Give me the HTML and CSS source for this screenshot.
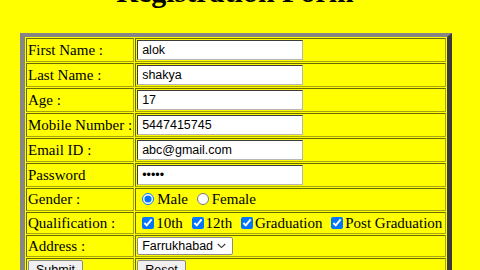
FILE: index.html
```html
<!DOCTYPE html>
<html>
<head>
<meta charset="utf-8">
<link rel="stylesheet" href="styles.css">
</head>
<body>
<h1 class="title">Registration Form</h1>
<form class="form">
<table class="reg">
  <tr class="row-input"><td class="label">First Name :</td><td class="field"><input class="text" type="text" value="alok"></td></tr>
  <tr class="row-input"><td class="label">Last Name :</td><td class="field"><input class="text" type="text" value="shakya"></td></tr>
  <tr class="row-input"><td class="label">Age :</td><td class="field"><input class="text" type="text" value="17"></td></tr>
  <tr class="row-input"><td class="label">Mobile Number :</td><td class="field"><input class="text" type="text" value="5447415745"></td></tr>
  <tr class="row-input"><td class="label">Email ID :</td><td class="field"><input class="text" type="text" value="abc@gmail.com"></td></tr>
  <tr class="row-input"><td class="label">Password</td><td class="field"><input class="text" type="password" value="alok1"></td></tr>
  <tr class="row-gender"><td class="label">Gender :</td><td class="field"><input class="radio" type="radio" name="g" checked>Male <input class="radio" type="radio" name="g">Female</td></tr>
  <tr class="row-small"><td class="label">Qualification :</td><td class="field"><input class="check" type="checkbox" checked>10th <input class="check" type="checkbox" checked>12th <input class="check" type="checkbox" checked>Graduation <input class="check" type="checkbox" checked>Post Graduation</td></tr>
  <tr class="row-small"><td class="label">Address :</td><td class="field"><select class="sel"><option>Farrukhabad</option></select></td></tr>
  <tr class="row-btn"><td class="label"><button class="btn" type="button">Submit</button></td><td class="field"><button class="btn" type="button">Reset</button></td></tr>
</table>
</form>
</body>
</html>
```

FILE: styles.css
```css
html, body {
  margin: 0;
  padding: 0;
  background: #ffff00;
  overflow: hidden;
}
body {
  font-family: "Liberation Serif", "Times New Roman", serif;
  color: #000;
  width: 480px;
  height: 270px;
}
.title {
  margin: -25px 0 0 0;
  height: 58px;
  font-size: 30px;
  line-height: 34px;
  font-weight: bold;
  text-align: center;
  padding-right: 10px;
  white-space: nowrap;
}
.form {
  margin: 0 0 0 20px;
}
.reg {
  width: 432px;
  border-collapse: separate;
  border-spacing: 1px;
  border-style: solid;
  border-width: 4px 5px 5px 5px;
  border-color: #858585 #3a3a3a #3a3a3a #858585;
  font-size: 15px;
  white-space: nowrap;
}
.reg td {
  padding: 1px;
  border: 1px solid;
  border-color: #6a6a00 #a5a510 #a5a510 #6a6a00;
  vertical-align: middle;
}
.label {
  width: 104px;
}
.row-input td { height: 20px; }
.row-gender td { height: 19px; }
.row-small td { height: 18px; }
.row-btn td { height: 20px; vertical-align: top; }
.text {
  box-sizing: border-box;
  display: block;
  width: 166px;
  height: 20px;
  margin: 0;
  padding: 0 4px;
  border: 1px solid;
  border-color: #3c3c3c #b5b5b5 #b5b5b5 #3c3c3c;
  background: #fff;
  font-family: "Liberation Sans", Arial, sans-serif;
  font-size: 12.5px;
  color: #000;
}
.radio {
  width: 12px;
  height: 12px;
  margin: 0 3px 0 5px;
  vertical-align: -1px;
}
.check {
  width: 12px;
  height: 12px;
  margin: 0 2px 0 5px;
  vertical-align: -1px;
}
.sel {
  appearance: none;
  -webkit-appearance: none;
  box-sizing: border-box;
  display: block;
  width: 96px;
  height: 18px;
  margin: 0;
  font-family: "Liberation Sans", Arial, sans-serif;
  font-size: 12.5px;
  padding: 0 0 0 4px;
  border: 1px solid #8a8a8a;
  border-radius: 2px;
  background: #fff url("data:image/svg+xml;utf8,<svg xmlns='http://www.w3.org/2000/svg' width='9' height='6' viewBox='0 0 9 6'><path d='M0.8 1 L4.5 4.6 L8.2 1' fill='none' stroke='%23333' stroke-width='1.1'/></svg>") no-repeat right 6px center;
  color: #000;
}
.btn {
  margin: 0;
  height: 20px;
  padding: 0 7px;
  font-family: "Liberation Sans", Arial, sans-serif;
  font-size: 12.5px;
  background: #efefef;
  border: 1px solid #8a8a8a;
  border-radius: 2px;
  color: #000;
}
```
